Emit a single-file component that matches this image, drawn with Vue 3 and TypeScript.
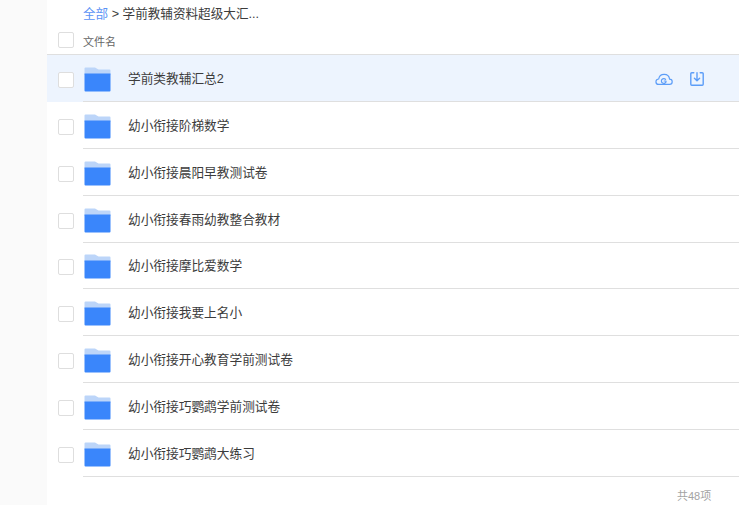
<script setup lang="ts">
const rows: string[] = [
  '学前类教辅汇总2',
  '幼小衔接阶梯数学',
  '幼小衔接晨阳早教测试卷',
  '幼小衔接春雨幼教整合教材',
  '幼小衔接摩比爱数学',
  '幼小衔接我要上名小',
  '幼小衔接开心教育学前测试卷',
  '幼小衔接巧鹦鹉学前测试卷',
  '幼小衔接巧鹦鹉大练习',
]
</script>

<template>
  <div class="page">
    <aside class="gutter"></aside>
    <main class="content">
      <div class="crumb"><a class="link">全部</a> &gt; 学前教辅资料超级大汇...</div>
      <div class="head">
        <span class="check"></span>
        <span class="head-label">文件名</span>
      </div>
      <div v-for="(name, i) in rows" :key="name" class="row" :class="{ active: i === 0 }">
        <span class="check"></span>
        <div class="cell">
          <svg class="folder" viewBox="0 0 27 25" width="27" height="25">
            <path d="M0.5 1.5 Q0.5 0.5 1.5 0.5 H11 L14.5 2.5 H25.5 Q26.5 2.5 26.5 3.5 V8 H0.5 Z" fill="#bcd5f9" />
            <path d="M0.5 6.5 H26.5 V23.5 Q26.5 24.5 25.5 24.5 H1.5 Q0.5 24.5 0.5 23.5 Z" fill="#3a86fb" />
          </svg>
          <span class="name">{{ name }}</span>
          <div v-if="i === 0" class="actions">
            <svg viewBox="0 0 18 12" width="18" height="12" fill="none" stroke="#5c9df8" stroke-width="1.2" stroke-linejoin="round" stroke-linecap="round">
              <path d="M3.6 11.4 H14.6 A2.6 2.6 0 0 0 14.6 6.2 A5.5 5.5 0 0 0 3.7 6 A2.7 2.7 0 0 0 3.6 11.4 Z" />
              <path d="M10.6 6.4 A2.4 2.4 0 1 0 11 9 V8 H9.2" />
            </svg>
            <svg viewBox="0 0 14 14" width="14" height="14" fill="none" stroke="#5c9df8" stroke-width="1.4" stroke-linejoin="round" stroke-linecap="round">
              <path d="M3.8 0.8 H1.8 Q0.8 0.8 0.8 1.8 V12.2 Q0.8 13.2 1.8 13.2 H12.2 Q13.2 13.2 13.2 12.2 V1.8 Q13.2 0.8 12.2 0.8 H10.2" />
              <path d="M7 0.8 V8.6 M4.4 6.2 L7 8.8 L9.6 6.2" />
            </svg>
          </div>
        </div>
      </div>
      <div class="total">共48项</div>
    </main>
  </div>
</template>

<style>
html, body { margin: 0; background: #fff; }
</style>

<style scoped>
.page {
  display: flex;
  width: 739px;
  height: 505px;
  overflow: hidden;
  font-family: "Liberation Sans", "Noto Sans CJK SC", sans-serif;
  color: #3c3c3c;
}
.gutter { width: 47px; flex: none; background: #fafafa; }
.content { flex: 1; min-width: 0; }
.crumb {
  height: 28px;
  line-height: 28px;
  padding-left: 36px;
  font-size: 12.6px;
}
.link { color: #5b93f5; }
.head {
  display: flex;
  align-items: center;
  box-sizing: border-box;
  height: 27px;
  padding-bottom: 3px;
}
.check {
  flex: none;
  box-sizing: border-box;
  width: 16px;
  height: 16px;
  margin-left: 11px;
  background: #fff;
  border: 1px solid #dedede;
  border-radius: 2px;
}
.row > .check { margin-top: 3px; }
.head-label {
  margin-left: 9px;
  margin-top: 3px;
  font-size: 11px;
  color: #666;
  line-height: 24px;
}
.row {
  display: flex;
  align-items: center;
  height: 46.89px;
  box-sizing: border-box;
}
.row.active { background: #edf4fe; }
.cell {
  flex: 1;
  display: flex;
  align-items: center;
  align-self: stretch;
  margin-left: 9px;
  padding-left: 1px;
  border-bottom: 1px solid #dfdfdf;
  min-width: 0;
}
.folder { flex: none; margin-top: 3px; }
.name {
  margin-left: 17px;
  margin-bottom: 1px;
  font-size: 12.7px;
  color: #3c3c3c;
}
.actions {
  margin-left: auto;
  margin-right: 35px;
  display: flex;
  align-items: center;
  gap: 17px;
  margin-top: 2px;
}
.total {
  margin-top: 10px;
  padding-left: 630px;
  font-size: 11px;
  color: #a3a3a3;
}
.head + .row { box-shadow: 0 -1px 0 #dfdfdf; }
</style>
